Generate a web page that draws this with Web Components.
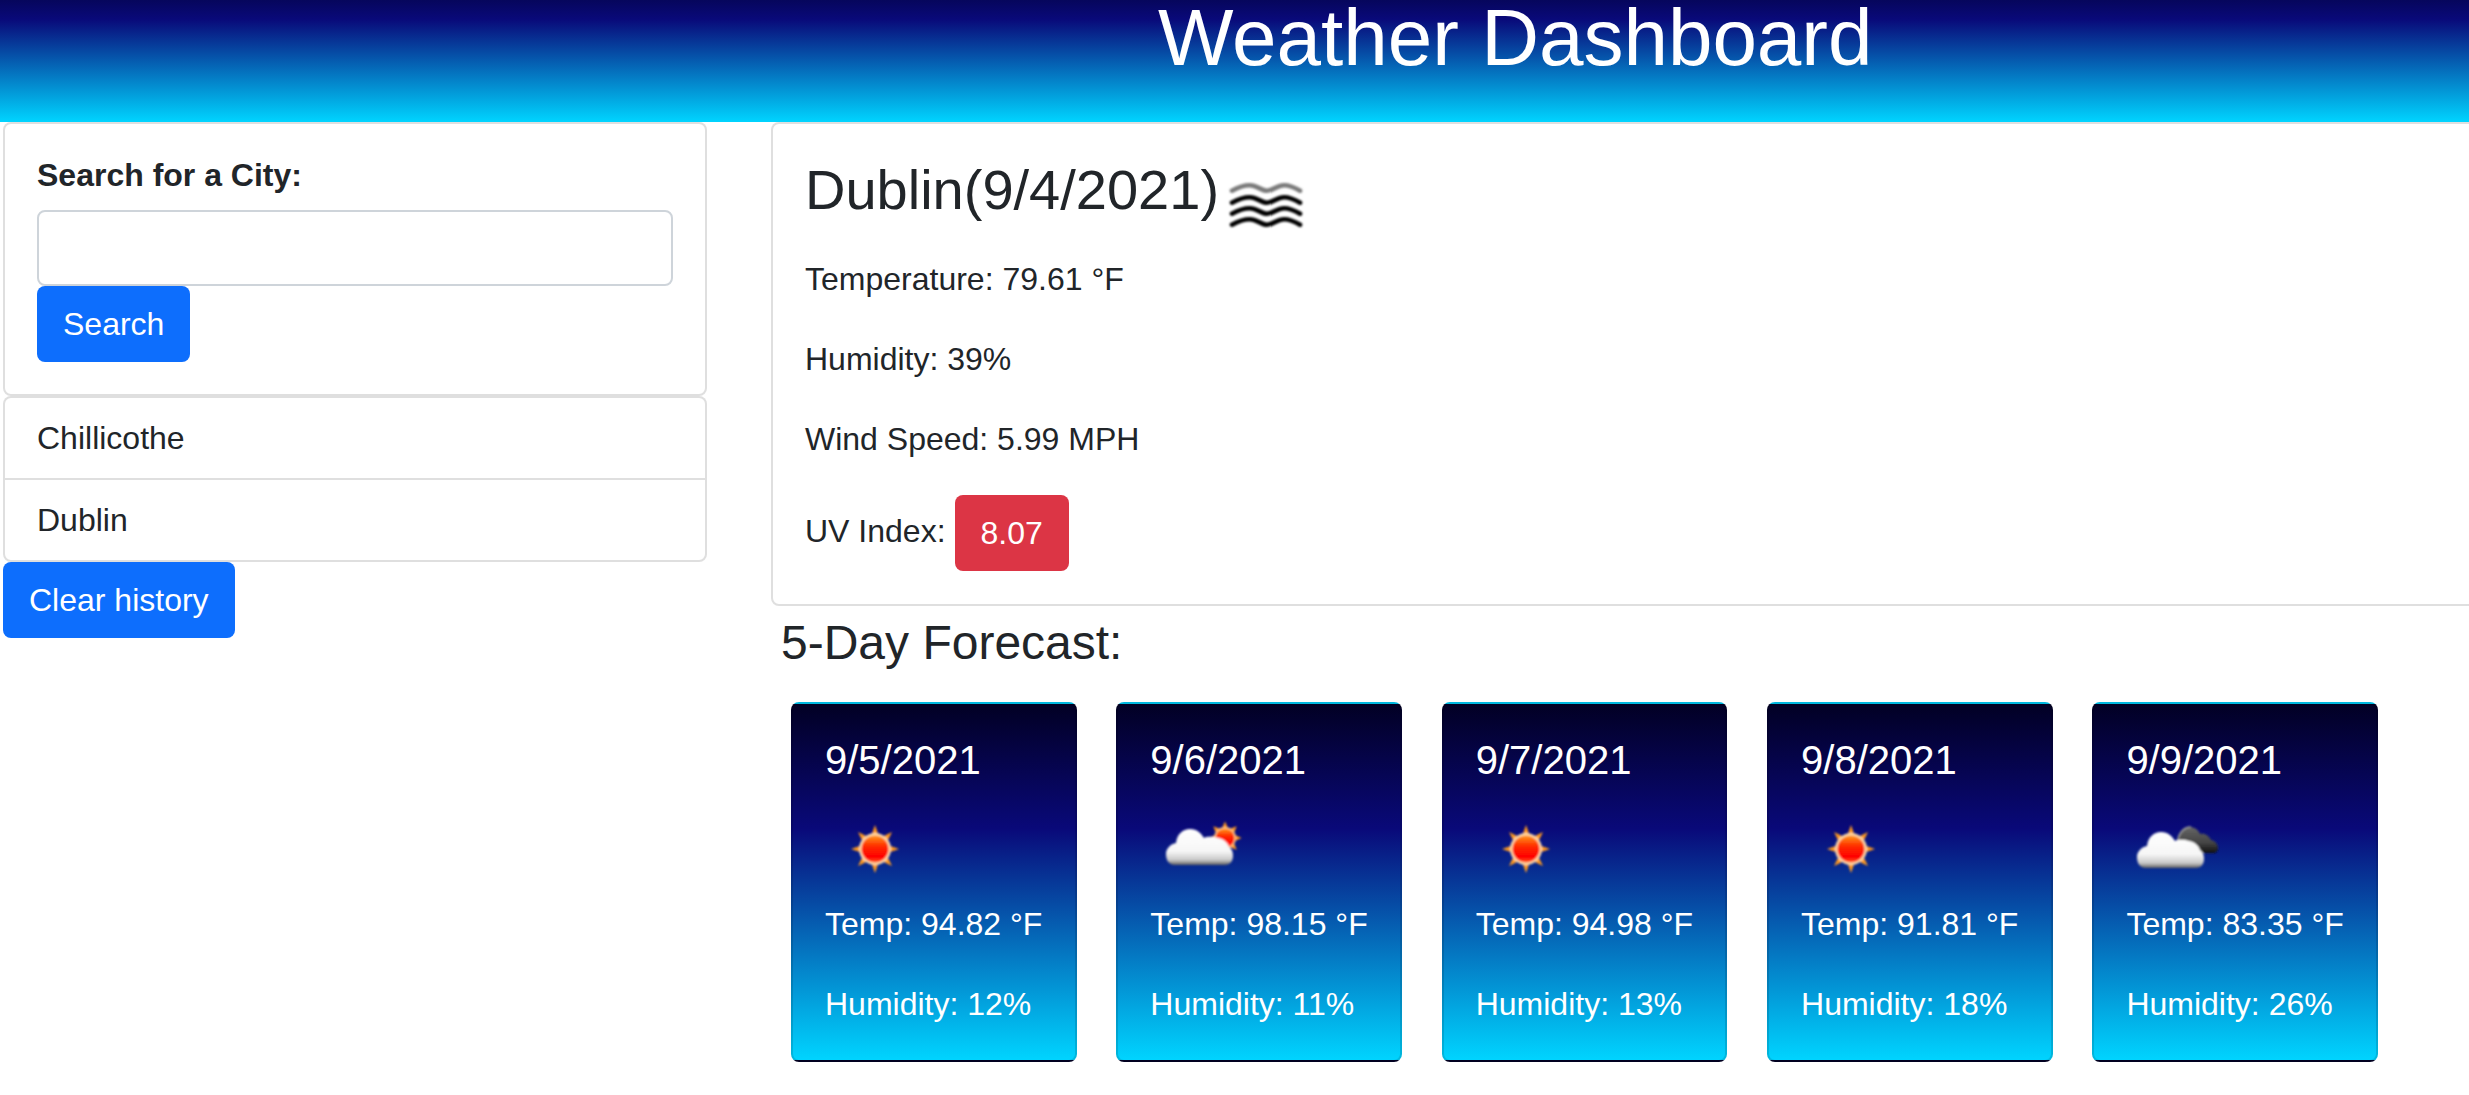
<!DOCTYPE html>
<html lang="en">
<head>
<meta charset="utf-8">
<title>Weather Dashboard</title>
<style>
html,body{margin:0;padding:0;height:1095px;overflow:hidden;background:#fff}
body{font:32px/48px "Liberation Sans",Arial,sans-serif;color:#212529}
</style>
</head>
<body>
<weather-app></weather-app>
<script>
const btnCss = `display:inline-block;box-sizing:border-box;height:76px;padding:12px 24px;border:2px solid transparent;border-radius:8px;font:32px/48px "Liberation Sans",Arial,sans-serif;color:#fff;white-space:nowrap;`;

class AppHeader extends HTMLElement{
  constructor(){super();this.attachShadow({mode:'open'}).innerHTML=`<style>
  :host{display:block;height:122px;padding-left:1158px;box-sizing:border-box;
    background:linear-gradient(to bottom,#06065c 0%,#090979 15.6%,#00d4ff 100%);color:#fff}
  h1{margin:0;font:400 80px/75px "Liberation Sans",Arial,sans-serif;white-space:nowrap}
  </style><h1><slot></slot></h1>`;}
}
class UiButton extends HTMLElement{
  constructor(){super();this.attachShadow({mode:'open'}).innerHTML=`<style>
  :host{${btnCss}background:#0d6efd}
  :host([danger]){background:#dc3545}
  </style><slot></slot>`;}
}
class SearchPanel extends HTMLElement{
  constructor(){super();this.attachShadow({mode:'open'}).innerHTML=`<style>
  :host{display:block;box-sizing:border-box;border:2px solid rgba(0,0,0,.125);border-radius:8px;padding:32px;background:#fff}
  h6{margin:0 0 16px;font:700 32px/38.4px "Liberation Sans",Arial,sans-serif;color:#212529}
  input{display:block;box-sizing:border-box;width:100%;height:76px;border:2px solid #ced4da;border-radius:8px;padding:12px 24px;font:32px/48px "Liberation Sans",Arial,sans-serif;background:#fff;outline:0}
  ui-button{display:block;width:max-content}
  </style><h6>Search for a City:</h6><input type="text" aria-label="Search for a City"><ui-button>Search</ui-button>`;}
}
class HistoryList extends HTMLElement{
  constructor(){super();this.attachShadow({mode:'open'}).innerHTML=`<style>
  :host{display:block;box-sizing:border-box;border:2px solid rgba(0,0,0,.125);border-radius:8px;background:#fff}
  </style><slot></slot>`;}
}
class HistoryItem extends HTMLElement{
  constructor(){super();this.attachShadow({mode:'open'}).innerHTML=`<style>
  :host{display:block;padding:16px 32px;color:#212529}
  :host(:not(:last-child)){border-bottom:2px solid rgba(0,0,0,.125)}
  </style><slot></slot>`;}
}
const sunRays = (cx,cy,r0,r1,w)=>{let s='';for(let i=0;i<8;i++){const a=i*Math.PI/4-Math.PI/2;
  const p=(rr,ang)=>`${(cx+rr*Math.cos(ang)).toFixed(2)},${(cy+rr*Math.sin(ang)).toFixed(2)}`;
  s+=`<polygon fill="#ff9a1e" points="${p(r1,a)} ${p(r0,a-w)} ${p(r0,a+w)}"/>`;}return s;};
const cloudPath=`M25 65C18 65 16 59 16 54C16 48 21 44 26 43C27 34 33 29 40 29C47 29 51 33 54 38C58 36 64 37 68 38C74 39 78 43 79 47C82 49 83 52 83 56C83 61 80 65 75 65Z`;
const defs=`<defs>
 <filter id="b" x="-20%" y="-20%" width="140%" height="140%"><feGaussianBlur stdDeviation=".8"/></filter>
 <linearGradient id="disc" x1="0" y1="0" x2="0" y2="1"><stop offset="0" stop-color="#ff9a1a"/><stop offset=".4" stop-color="#ff2a00"/><stop offset=".8" stop-color="#ff0000"/><stop offset="1" stop-color="#ff5a1a"/></linearGradient>
 <linearGradient id="cl" x1="0" y1="0" x2="0" y2="1"><stop offset="0" stop-color="#fff"/><stop offset=".62" stop-color="#f6f6f6"/><stop offset=".86" stop-color="#c8c8c8"/><stop offset="1" stop-color="#5e5e5e"/></linearGradient>
 <linearGradient id="dk" x1="0" y1="0" x2="0" y2="1"><stop offset="0" stop-color="#666"/><stop offset=".6" stop-color="#444"/><stop offset="1" stop-color="#111"/></linearGradient>
</defs>`;
const icons={
  sun:`<g filter="url(#b)">${sunRays(50,49,12,24,.38)}<circle cx="50" cy="49" r="16" fill="#ffd9a8"/><circle cx="50" cy="49" r="13.5" fill="url(#disc)"/></g>`,
  partly:`<g filter="url(#b)">${sunRays(75,38,9,16.5,.42)}<circle cx="75" cy="38" r="11" fill="#ffc78a"/><circle cx="75" cy="38" r="9.5" fill="url(#disc)"/><path d="${cloudPath}" fill="url(#cl)"/></g>`,
  clouds:`<g filter="url(#b)"><path d="M58 53C52 50 50 44 52 38C53 31 59 26 65 27C70 28 73 31 74 34C79 33 83 36 85 40C90 41 92 45 92 48C92 51 90 53 87 53Z" fill="url(#dk)"/><path d="M52 44C51 35 57 27 65 27" fill="none" stroke="#999" stroke-width="1.6"/><path transform="translate(-5 3)" d="${cloudPath}" fill="url(#cl)"/></g>`,
  mist:`<g filter="url(#b)" transform="translate(0 .7)" fill="none" stroke-linecap="round" stroke-width="4.6">
   <path stroke="#7a7a7a" d="M13 34C20 30 26 28.5 31 28.5C38 28.5 42 34 48 34C54 34 58 28.5 65 28.5C72 28.5 76 31 81 34"/>
   <path stroke="#050505" d="M13 46C20 42 26 40.5 31 40.5C38 40.5 42 46 48 46C54 46 58 40.5 65 40.5C72 40.5 76 43 81 46"/>
   <path stroke="#050505" d="M13 57C20 53 26 51.5 31 51.5C38 51.5 42 57 48 57C54 57 58 51.5 65 51.5C72 51.5 76 54 81 57"/>
   <path stroke="#050505" d="M13 68C20 64 26 62.5 31 62.5C38 62.5 42 68 48 68C54 68 58 62.5 65 62.5C72 62.5 76 65 81 68"/></g>`
};
class WeatherIcon extends HTMLElement{
  constructor(){super();this.attachShadow({mode:'open'});}
  connectedCallback(){const k=this.getAttribute('kind');
    this.shadowRoot.innerHTML=`<style>:host{display:inline-block;width:100px;height:100px;vertical-align:middle}svg{display:block}</style>
    <svg width="100" height="100" viewBox="0 0 100 100" role="img" aria-label="${k}">${defs}${icons[k]}</svg>`;}
}
class CurrentWeather extends HTMLElement{
  constructor(){super();this.attachShadow({mode:'open'}).innerHTML=`<style>
  :host{display:block;box-sizing:border-box;width:1800px;height:484px;border:2px solid rgba(0,0,0,.125);border-radius:8px;padding:32px;background:#fff}
  h3{margin:0;font:400 56px/67.2px "Liberation Sans",Arial,sans-serif;display:flex;align-items:flex-start;height:99px;white-space:nowrap}
  p{margin:0 0 32px}
  .uv{margin:0;display:flex;align-items:center;gap:9px}
  .uv span{padding-bottom:4px}
  </style>
  <h3><span>Dublin(9/4/2021)</span><weather-icon kind="mist"></weather-icon></h3>
  <p>Temperature: 79.61 °F</p><p>Humidity: 39%</p><p>Wind Speed: 5.99 MPH</p>
  <div class="uv"><span>UV Index:</span><ui-button danger>8.07</ui-button></div>`;}
}
class ForecastCard extends HTMLElement{
  constructor(){super();this.attachShadow({mode:'open'});}
  connectedCallback(){const a=n=>this.getAttribute(n);
   this.shadowRoot.innerHTML=`<style>
  :host{display:block;box-sizing:border-box;width:285.6px;height:360px;border:2px solid rgba(0,0,0,.125);border-radius:8px;padding:32px;color:#fff;
    background:linear-gradient(to bottom,#020024 0%,#090979 35%,#00d4ff 100%)}
  h5{margin:0 0 16px;font:400 40px/48px "Liberation Sans",Arial,sans-serif}
  weather-icon{display:block}
  p{margin:0 0 32px;white-space:nowrap}
  p:last-child{margin:0}
  </style><h5>${a('date')}</h5><weather-icon kind="${a('icon')}"></weather-icon><p>Temp: ${a('temp')} °F</p><p>Humidity: ${a('hum')}%</p>`;}
}
class ForecastSection extends HTMLElement{
  constructor(){super();this.attachShadow({mode:'open'}).innerHTML=`<style>
  :host{display:block;padding:8px 0 0 10px}
  h4{margin:0 0 30px;font:400 48px/57.6px "Liberation Sans",Arial,sans-serif}
  .row{display:flex;gap:39.75px;margin-left:10px}
  </style><h4>5-Day Forecast:</h4><div class="row"><slot></slot></div>`;}
}
class WeatherApp extends HTMLElement{
  constructor(){super();this.attachShadow({mode:'open'}).innerHTML=`<style>
  :host{display:block}
  .main{display:flex;gap:65px;padding-left:3px}
  .left{width:703px;flex:none}
  .left>*{width:704px}
  .left>.clear{width:max-content}
  .right{flex:none;min-width:0}
  .clear{display:block}
  </style>
  <app-header>Weather Dashboard</app-header>
  <div class="main">
    <div class="left">
      <search-panel></search-panel>
      <history-list><history-item>Chillicothe</history-item><history-item>Dublin</history-item></history-list>
      <ui-button class="clear">Clear history</ui-button>
    </div>
    <div class="right">
      <current-weather></current-weather>
      <forecast-section>
        <forecast-card date="9/5/2021" icon="sun" temp="94.82" hum="12"></forecast-card>
        <forecast-card date="9/6/2021" icon="partly" temp="98.15" hum="11"></forecast-card>
        <forecast-card date="9/7/2021" icon="sun" temp="94.98" hum="13"></forecast-card>
        <forecast-card date="9/8/2021" icon="sun" temp="91.81" hum="18"></forecast-card>
        <forecast-card date="9/9/2021" icon="clouds" temp="83.35" hum="26"></forecast-card>
      </forecast-section>
    </div>
  </div>`;}
}
customElements.define('ui-button',UiButton);
customElements.define('app-header',AppHeader);
customElements.define('search-panel',SearchPanel);
customElements.define('history-item',HistoryItem);
customElements.define('history-list',HistoryList);
customElements.define('weather-icon',WeatherIcon);
customElements.define('current-weather',CurrentWeather);
customElements.define('forecast-card',ForecastCard);
customElements.define('forecast-section',ForecastSection);
customElements.define('weather-app',WeatherApp);
</script>
</body>
</html>
